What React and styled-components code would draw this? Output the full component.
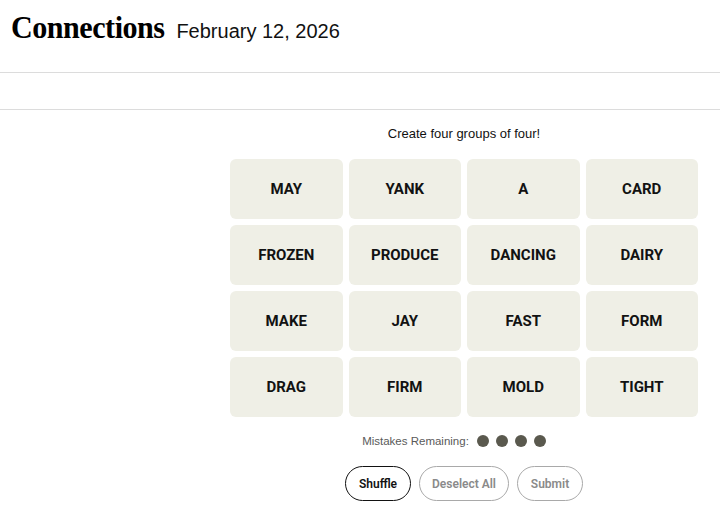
import React from "react";
import styled, { createGlobalStyle } from "styled-components";

const Global = createGlobalStyle`
  html, body { margin: 0; padding: 0; background: #fff; }
  body { font-family: "Liberation Sans", Arial, sans-serif; color: #000; }
`;

const Header = styled.header`
  height: 73px;
  border-bottom: 1px solid #dcdcdc;
  display: flex;
  align-items: baseline;
  padding: 9px 0 0 11px;
  box-sizing: border-box;
  gap: 11px;
`;

const Title = styled.h1`
  margin: 0;
  font-family: "Liberation Serif", "Times New Roman", serif;
  font-weight: 700;
  font-size: 32px;
  letter-spacing: -0.5px;
  line-height: 36px;
  transform: scaleX(0.94);
  transform-origin: left center;
  margin-right: -9px;
`;

const DateText = styled.span`
  font-family: "Liberation Sans", Arial, sans-serif;
  font-size: 20px;
  font-weight: 400;
  color: #111;
`;

const SubBar = styled.div`
  height: 36px;
  border-bottom: 1px solid #dcdcdc;
`;

const Main = styled.main`
  padding-left: 230px;
  width: 468px;
  display: flex;
  flex-direction: column;
  align-items: center;
`;

const Prompt = styled.p`
  margin: 16px 0 0;
  font-size: 13px;
  line-height: 15px;
  color: #111;
`;

const Grid = styled.div`
  margin-top: 18px;
  width: 468px;
  display: grid;
  grid-template-columns: repeat(4, 1fr);
  grid-auto-rows: 60px;
  gap: 6px;
`;

const Tile = styled.button`
  border: none;
  border-radius: 6px;
  background: #efefe6;
  font-family: Roboto, "Liberation Sans", sans-serif;
  font-weight: 700;
  font-size: 15px;
  color: #121212;
  text-transform: uppercase;
  padding: 0;
  cursor: pointer;
`;

const Mistakes = styled.div`
  margin-top: 17px;
  margin-right: 20px;
  display: flex;
  align-items: center;
  gap: 8px;
  font-size: 11.5px;
  color: #5a5a5a;
  height: 14px;
`;

const Dots = styled.div`
  display: flex;
  gap: 7px;
`;

const Dot = styled.span`
  width: 12px;
  height: 12px;
  border-radius: 50%;
  background: #5a594e;
`;

const Actions = styled.div`
  margin-top: 18px;
  display: flex;
  gap: 8px;
`;

const Pill = styled.button`
  height: 35px;
  width: ${(p) => p.$w}px;
  padding: 0;
  border-radius: 18px;
  background: #fff;
  border: 1px solid ${(p) => (p.$active ? "#121212" : "#a9a9a9")};
  color: ${(p) => (p.$active ? "#121212" : "#8a8a8a")};
  font-family: Roboto, "Liberation Sans", sans-serif;
  font-weight: 600;
  font-size: 12px;
  cursor: pointer;
`;

const words = [
  "MAY", "YANK", "A", "CARD",
  "FROZEN", "PRODUCE", "DANCING", "DAIRY",
  "MAKE", "JAY", "FAST", "FORM",
  "DRAG", "FIRM", "MOLD", "TIGHT",
];

export default function App() {
  return (
    <>
      <Global />
      <Header>
        <Title>Connections</Title>
        <DateText>February 12, 2026</DateText>
      </Header>
      <SubBar />
      <Main>
        <Prompt>Create four groups of four!</Prompt>
        <Grid>
          {words.map((w) => (
            <Tile key={w}>{w}</Tile>
          ))}
        </Grid>
        <Mistakes>
          <span>Mistakes Remaining:</span>
          <Dots>
            <Dot />
            <Dot />
            <Dot />
            <Dot />
          </Dots>
        </Mistakes>
        <Actions>
          <Pill $active $w={66}>Shuffle</Pill>
          <Pill $w={90}>Deselect All</Pill>
          <Pill $w={66}>Submit</Pill>
        </Actions>
      </Main>
    </>
  );
}
